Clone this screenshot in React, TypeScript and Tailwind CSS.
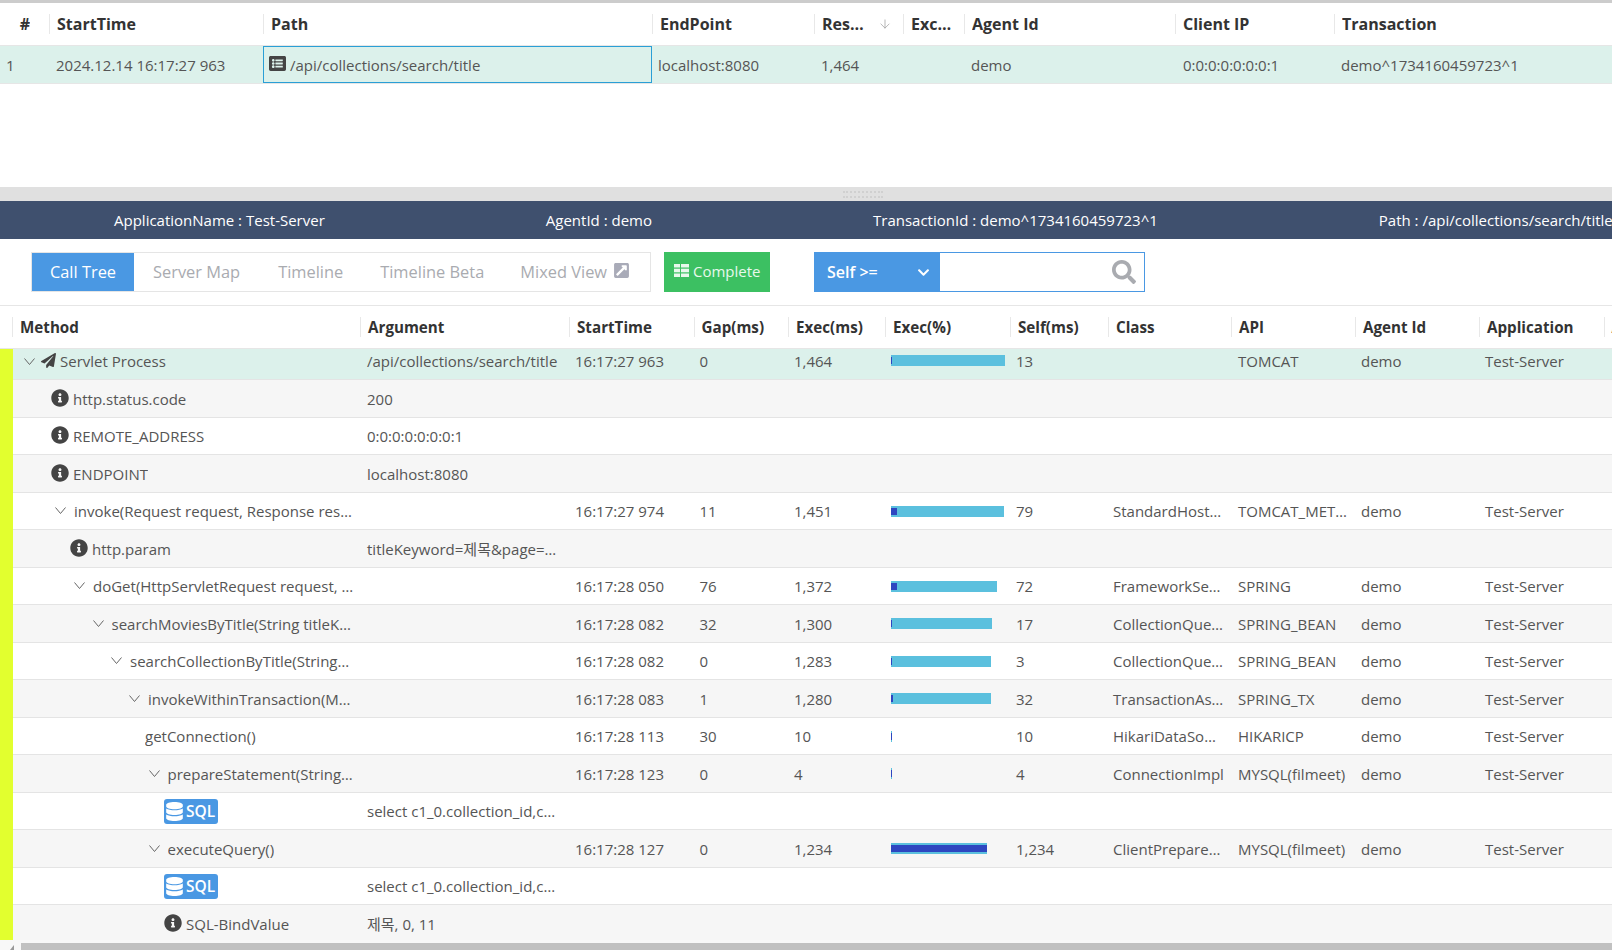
import { ArrowDown } from "lucide-react";
import {
  FaChevronDown,
  FaDatabase,
  FaExternalLinkSquareAlt,
  FaInfoCircle,
  FaListAlt,
  FaPaperPlane,
  FaSearch,
} from "react-icons/fa";

const topCols = [
  { name: "#", width: "w-[49px]" },
  { name: "StartTime", width: "w-[214px]" },
  { name: "Path", width: "w-[389px]" },
  { name: "EndPoint", width: "w-[162px]" },
  { name: "ResponseTime", width: "w-[89px]" },
  { name: "Exception", width: "w-[61px]" },
  { name: "Agent Id", width: "w-[211px]" },
  { name: "Client IP", width: "w-[159px]" },
  { name: "Transaction", width: "w-[278px]" },
];

const treeCols = [
  { name: "Method", width: "w-[348px]" },
  { name: "Argument", width: "w-[209px]" },
  { name: "StartTime", width: "w-[124.5px]" },
  { name: "Gap(ms)", width: "w-[94.5px]" },
  { name: "Exec(ms)", width: "w-[97px]" },
  { name: "Exec(%)", width: "w-[125px]" },
  { name: "Self(ms)", width: "w-[98px]" },
  { name: "Class", width: "w-[123px]" },
  { name: "API", width: "w-[124px]" },
  { name: "Agent Id", width: "w-[124px]" },
  { name: "Application", width: "w-[124.5px]" },
  { name: "Agent Name", width: "w-[124px]" },
];

type Row = {
  indent: number;
  chevron?: boolean;
  icon?: "plane" | "info" | "sql";
  label?: string;
  arg?: string;
  start?: string;
  gap?: string;
  exec?: string;
  bar?: number;
  inner?: number;
  self?: string;
  cls?: string;
  api?: string;
  shade?: string;
};

const rows: Row[] = [
  { indent: 10, chevron: true, icon: "plane", label: "Servlet Process", arg: "/api/collections/search/title", start: "16:17:27 963", gap: "0", exec: "1,464", bar: 114, inner: 1, self: "13", api: "TOMCAT", shade: "bg-[#dcf1eb]" },
  { indent: 38, icon: "info", label: "http.status.code", arg: "200", shade: "bg-[#f6f6f6]" },
  { indent: 38, icon: "info", label: "REMOTE_ADDRESS", arg: "0:0:0:0:0:0:0:1" },
  { indent: 38, icon: "info", label: "ENDPOINT", arg: "localhost:8080", shade: "bg-[#f6f6f6]" },
  { indent: 41, chevron: true, label: "invoke(Request request, Response response)", start: "16:17:27 974", gap: "11", exec: "1,451", bar: 113, inner: 6, self: "79", cls: "StandardHostValve", api: "TOMCAT_METHOD" },
  { indent: 57, icon: "info", label: "http.param", arg: "titleKeyword=제목&page=0&size=10", shade: "bg-[#f6f6f6]" },
  { indent: 60, chevron: true, label: "doGet(HttpServletRequest request, HttpServletResponse response)", start: "16:17:28 050", gap: "76", exec: "1,372", bar: 106, inner: 6, self: "72", cls: "FrameworkServlet", api: "SPRING" },
  { indent: 78.5, chevron: true, label: "searchMoviesByTitle(String titleKeyword, Pageable pageable)", start: "16:17:28 082", gap: "32", exec: "1,300", bar: 101, inner: 1, self: "17", cls: "CollectionQueryService", api: "SPRING_BEAN", shade: "bg-[#f6f6f6]" },
  { indent: 97, chevron: true, label: "searchCollectionByTitle(StringKeyword titleKeyword)", start: "16:17:28 082", gap: "0", exec: "1,283", bar: 100, inner: 1, self: "3", cls: "CollectionQueryRepository", api: "SPRING_BEAN" },
  { indent: 115, chevron: true, label: "invokeWithinTransaction(Method method)", start: "16:17:28 083", gap: "1", exec: "1,280", bar: 100, inner: 2, self: "32", cls: "TransactionAspectSupport", api: "SPRING_TX", shade: "bg-[#f6f6f6]" },
  { indent: 132, label: "getConnection()", start: "16:17:28 113", gap: "30", exec: "10", bar: 1, inner: 1, self: "10", cls: "HikariDataSource", api: "HIKARICP" },
  { indent: 134.5, chevron: true, label: "prepareStatement(String sql, int type)", start: "16:17:28 123", gap: "0", exec: "4", bar: 1, inner: 1, self: "4", cls: "ConnectionImpl", api: "MYSQL(filmeet)", shade: "bg-[#f6f6f6]" },
  { indent: 151, icon: "sql", arg: "select c1_0.collection_id,c1_0.title,c1_0.created_at" },
  { indent: 134.5, chevron: true, label: "executeQuery()", start: "16:17:28 127", gap: "0", exec: "1,234", bar: 96, inner: 96, self: "1,234", cls: "ClientPreparedStatement", api: "MYSQL(filmeet)", shade: "bg-[#f6f6f6]" },
  { indent: 151, icon: "sql", arg: "select c1_0.collection_id,c1_0.title,c1_0.created_at" },
  { indent: 151, icon: "info", label: "SQL-BindValue", arg: "제목, 0, 11", shade: "bg-[#f6f6f6]" },
];

function HeaderCell({ name, width, sorted }: { name: string; width: string; sorted?: boolean }) {
  return (
    <div className={`${width} shrink-0 h-[20px] border-l border-[#e8e8e8] first:border-l-0 first:justify-center first:pl-0 first:pr-0 pl-[7px] ${sorted ? "pr-[11px]" : "pr-[6px]"} flex items-center`}>
      <span className={`truncate min-w-0 text-[16px] font-bold text-[#333] ${name === "#" ? "pl-[1px]" : "flex-1"}`}>{name}</span>
      {sorted && <ArrowDown className="shrink-0 text-[#999] ml-[10px]" size={14} strokeWidth={1.2} />}
    </div>
  );
}

function TreeChevron({ tight }: { tight: boolean }) {
  return (
    <svg className={`shrink-0 ${tight ? "mr-[5px]" : "mr-[7px]"}`} width="13" height="8" viewBox="0 0 13 8" fill="none" stroke="#666" strokeWidth="1">
      <polyline points="1.5,0.5 6.5,6.5 11.5,0.5" />
    </svg>
  );
}

// two columns, three rows, the glyph on the Complete button
function CompleteIcon() {
  return (
    <svg className="shrink-0 mr-[4px] -mt-[2px]" width="15" height="13" viewBox="0 0 15 13" fill="currentColor">
      <rect x="0" y="0" width="6" height="3.5" />
      <rect x="7" y="0" width="8" height="3.5" />
      <rect x="0" y="4.7" width="6" height="3.6" />
      <rect x="7" y="4.7" width="8" height="3.6" />
      <rect x="0" y="9.5" width="6" height="3.5" />
      <rect x="7" y="9.5" width="8" height="3.5" />
    </svg>
  );
}

function Bar({ width, inner }: { width: number; inner: number }) {
  return (
    <div className="relative h-[11px] bg-[#5bc0de]" style={{ width }}>
      <div className="absolute left-0 top-[2px] h-[7px] bg-[#2d46c0]" style={{ width: inner }} />
    </div>
  );
}

function TreeRow({ row, first }: { row: Row; first: boolean }) {
  const cell = "shrink-0 pl-[6px] pr-[3px] truncate";
  return (
    <div className={`flex items-center shrink-0 border-b border-[#e4e4e4] ${first ? "h-[31px] pb-[5px]" : "h-[37.5px] pt-[1px]"} ${row.shade ?? "bg-white"}`}>
      <div className="w-[347px] shrink-0 flex items-center pr-[6px]" style={{ paddingLeft: row.indent }}>
        {row.chevron && <TreeChevron tight={row.icon === "plane"} />}
        {row.icon === "plane" && <FaPaperPlane className="shrink-0 text-[#444] mr-[4px] -mt-[2px]" size={15} />}
        {row.icon === "info" && <FaInfoCircle className="shrink-0 text-[#444] mr-[4px] -mt-[2px]" size={18} />}
        {row.icon === "sql" && (
          <span className="flex items-center bg-[#4a98e3] rounded-[3px] h-[25px] w-[54px] pl-[1px] text-white text-[15.5px] font-semibold">
            <FaDatabase className="shrink-0 mr-[2px]" size={19} />
            SQL
          </span>
        )}
        {row.label && <span className="truncate min-w-0">{row.label}</span>}
      </div>
      <div className="shrink-0 pl-[7px] pr-[11px] truncate w-[209px]">{row.arg}</div>
      <div className={`${cell} w-[124.5px]`}>{row.start}</div>
      <div className={`${cell} w-[94.5px]`}>{row.gap}</div>
      <div className={`${cell} w-[97px]`}>{row.exec}</div>
      <div className={`shrink-0 w-[125px] pl-[6px] ${first ? "-mt-[3px]" : ""}`}>
        {row.bar !== undefined && <Bar width={row.bar} inner={row.inner ?? 0} />}
      </div>
      <div className={`${cell} w-[98px]`}>{row.self}</div>
      <div className="shrink-0 pl-[5px] pr-[7px] truncate w-[123px]">{row.cls}</div>
      <div className="shrink-0 pl-[7px] pr-[2px] truncate w-[124px]">{row.api}</div>
      <div className={`${cell} w-[124px]`}>{row.api || row.start ? "demo" : ""}</div>
      <div className={`${cell} w-[124.5px]`}>{row.api || row.start ? "Test-Server" : ""}</div>
    </div>
  );
}

export default function App() {
  return (
    <div className="h-screen w-[1612px] overflow-hidden flex flex-col bg-white text-[15px] text-[#555] font-['Open_Sans','Noto_Sans_CJK_KR',sans-serif]">
      <div className="h-[3px] shrink-0 bg-[#cccccc]" />

      {/* transaction list */}
      <div className="h-[43px] shrink-0 flex items-center border-b border-[#e6e6e6]">
        {topCols.map((c, i) => (
          <HeaderCell key={c.name} name={c.name} width={c.width} sorted={i === 4} />
        ))}
      </div>
      <div className="h-[38px] shrink-0 flex items-center bg-[#dcf1eb] border-b border-[#e6e6e6]">
        <div className="w-[49px] shrink-0 pl-[6px] pt-[2px]">1</div>
        <div className="w-[214px] shrink-0 pl-[7px] pt-[2px]">2024.12.14 16:17:27 963</div>
        <div className="w-[389px] shrink-0 h-[37px] flex items-center border border-[#2a9fd6] pl-[5px] pt-[2px]">
          <FaListAlt className="shrink-0 text-[#444] mr-[4px] -mt-[5px]" size={17} />
          /api/collections/search/title
        </div>
        <div className="w-[162px] shrink-0 pl-[6px] pt-[2px]">localhost:8080</div>
        <div className="w-[89px] shrink-0 pl-[7px] pt-[2px]">1,464</div>
        <div className="w-[61px] shrink-0" />
        <div className="w-[211px] shrink-0 pl-[7px] pt-[2px]">demo</div>
        <div className="w-[159px] shrink-0 pl-[8px] pt-[2px]">0:0:0:0:0:0:0:1</div>
        <div className="w-[278px] shrink-0 pl-[7px] pt-[2px]">demo^1734160459723^1</div>
      </div>
      <div className="h-[103px] shrink-0" />

      {/* splitter */}
      <div className="h-[14px] shrink-0 bg-[#e0e0e0] flex items-center justify-center">
        <div className="w-[40px] h-[7px] ml-[114px] border-y-2 border-dotted border-[#d0d0d0]" />
      </div>

      {/* transaction info */}
      <div className="h-[38px] shrink-0 bg-[#3f506e] text-white flex items-center pl-[114px] gap-[221px] whitespace-nowrap overflow-hidden">
        <span>ApplicationName : Test-Server</span>
        <span>AgentId : demo</span>
        <span>TransactionId : demo^1734160459723^1</span>
        <span>Path : /api/collections/search/title</span>
      </div>

      {/* toolbar */}
      <div className="h-[67px] shrink-0 border-b border-[#e6e6e6] flex items-center pl-[31px]">
        <div className="w-[620px] h-[40px] shrink-0 border border-[#e5e5e5] flex items-center whitespace-nowrap text-[16.4px] text-[#a9abb0]">
          <div className="w-[102px] shrink-0 h-[38px] bg-[#4a98e3] text-white flex items-center justify-center">Call Tree</div>
          <div className="px-[19px]">Server Map</div>
          <div className="px-[19px]">Timeline</div>
          <div className="pl-[18px] pr-[18px]">Timeline Beta</div>
          <div className="pl-[18px] flex items-center">
            Mixed View
            <FaExternalLinkSquareAlt className="shrink-0 ml-[6px] -mt-[2px] text-[#a9abb8]" size={17} />
          </div>
        </div>
        <div className="w-[106px] h-[40px] ml-[13px] shrink-0 bg-[#3cc062] text-[#e8f8ec] flex items-center pl-[10px] pb-[1px]">
          <CompleteIcon />
          Complete
        </div>
        <div className="w-[331px] h-[40px] ml-[44px] shrink-0 border border-[#4a98e3] flex items-center">
          <div className="w-[125px] h-[38px] bg-[#4a98e3] text-white text-[16px] font-semibold flex items-center justify-between pl-[12px] pr-[10px]">
            Self &gt;=
            <FaChevronDown size={13} />
          </div>
          <div className="flex-1 flex justify-end pr-[8px]">
            <FaSearch className="text-[#a9abb0]" size={24} />
          </div>
        </div>
      </div>

      {/* call tree */}
      <div className="h-[43px] shrink-0 flex items-center pl-[12px] border-b border-[#e6e6e6]">
        {treeCols.map((c) => (
          <div key={c.name} className={`${c.width} shrink-0 h-[20px] border-l border-[#e8e8e8] pl-[7px] flex items-center whitespace-nowrap text-[15.2px] font-bold text-[#333]`}>
            {c.name}
          </div>
        ))}
      </div>
      <div className="flex-1 min-h-0 flex overflow-hidden">
        <div className="w-[13px] shrink-0 bg-[#e2ff2f]" />
        <div className="w-[1599px] shrink-0 flex flex-col">
          {rows.map((row, i) => (
            <TreeRow key={i} row={row} first={i === 0} />
          ))}
        </div>
      </div>
      <div className="h-[10px] shrink-0 pt-[3px] bg-[#f8f8f8] flex">
        <div className="w-[21px] flex items-end pl-[10px]">
          <svg width="4" height="5" viewBox="0 0 4 5" fill="#999">
            <polygon points="4,0 4,5 0,5" />
          </svg>
        </div>
        <div className="flex-1 bg-[#c1c1c1]" />
      </div>
    </div>
  );
}
